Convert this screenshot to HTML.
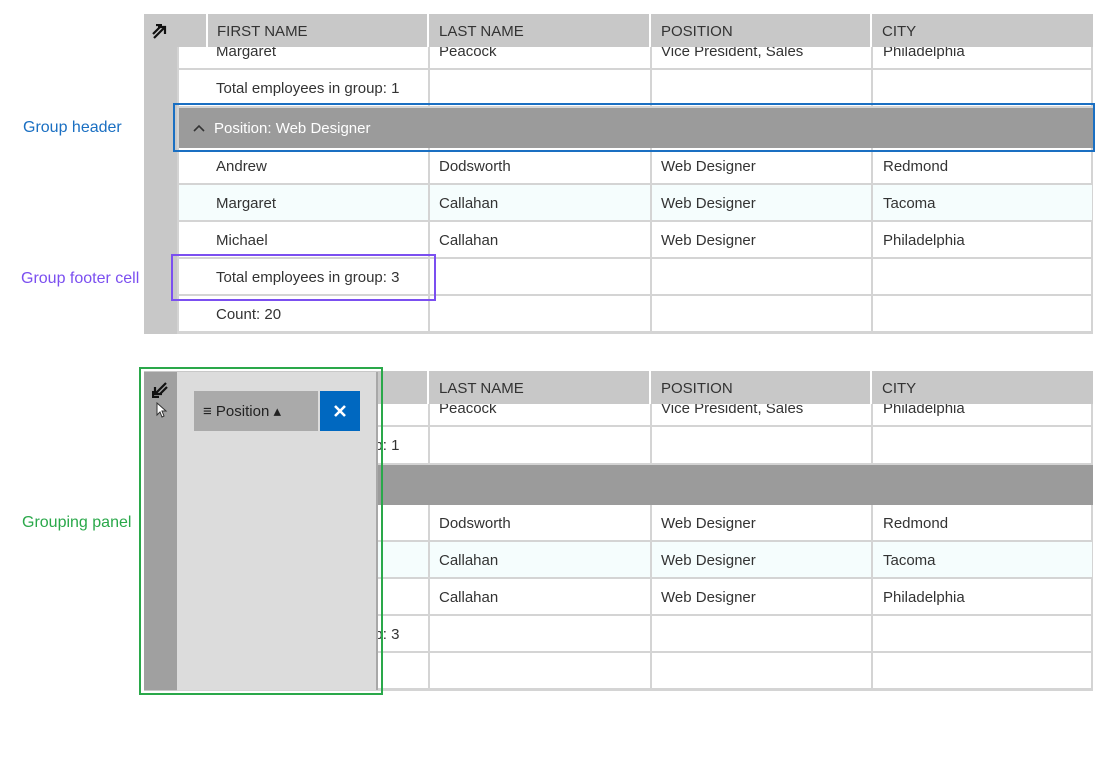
<!DOCTYPE html>
<html><head><meta charset="utf-8"><style>
*{margin:0;padding:0;box-sizing:border-box}
body{width:1100px;height:758px;background:#fff;position:relative;overflow:hidden;font-family:"Liberation Sans",sans-serif;color:#333}
.a{position:absolute}
.lbl{position:absolute;font-size:16px}
.grid{position:absolute;left:144px;width:949px;height:320px;overflow:hidden}
.bar{position:absolute;left:0;top:0;width:33px;height:320px;background:#c8c8c8}
.body{position:absolute;left:33px;top:0;width:916px;height:320px;border-left:2px solid #d4d4d4;border-right:2px solid #d4d4d4;border-bottom:2px solid #d4d4d4}
.row{position:absolute;left:0;width:913px;height:37px;border-bottom:2px solid #d4d4d4;font-size:15px}
.row span{position:absolute;top:10px}
.vl{position:absolute;top:0;width:2px;height:320px;background:#d4d4d4}
.hdr{position:absolute;left:33px;top:0;width:916px;height:33px;background:#c8c8c8;font-size:15px}
.hdr span{position:absolute;top:9px;color:#333}
.hs{position:absolute;top:0;width:2px;height:33px;background:#fff}
.gh{position:absolute;left:0;width:914px;height:40px;background:#9b9b9b;color:#fff;font-size:15px}
</style></head><body>

<div class="lbl" style="left:23px;top:119px;color:#1a6fc2">Group header</div>
<div class="lbl" style="left:21px;top:270px;color:#7b4ff0">Group footer cell</div>
<div class="lbl" style="left:22px;top:514px;color:#2aa84a">Grouping panel</div>

<!-- grid 1 -->
<div class="grid" style="top:14px">
  <div class="bar"></div>
  <svg class="a" style="left:8px;top:10px" width="16" height="16" viewBox="0 0 16 16"><path d="M2 14L12 4M6 3h7v7M1 10L8 3M4 1h6" stroke="#111" stroke-width="2.2" fill="none"/></svg>
  <div class="body">
    <div class="row" style="top:19px;height:37px"><span style="left:37px">Margaret</span><span style="left:260px">Peacock</span><span style="left:482px">Vice President, Sales</span><span style="left:704px">Philadelphia</span></div>
    <div class="row" style="top:56px;height:38px"><span style="left:37px">Total employees in group: 1</span></div>
    <div class="gh" style="top:94px"><svg class="a" style="left:14px;top:16px" width="12" height="8" viewBox="0 0 12 8"><path d="M1 7L6 2L11 7" stroke="#333" stroke-width="1.6" fill="none"/></svg><span class="a" style="left:35px;top:12px">Position: Web Designer</span></div>
    <div class="row" style="top:134px"><span style="left:37px">Andrew</span><span style="left:260px">Dodsworth</span><span style="left:482px">Web Designer</span><span style="left:704px">Redmond</span></div>
    <div class="row" style="top:171px;background:#f5fdfd"><span style="left:37px">Margaret</span><span style="left:260px">Callahan</span><span style="left:482px">Web Designer</span><span style="left:704px">Tacoma</span></div>
    <div class="row" style="top:208px"><span style="left:37px">Michael</span><span style="left:260px">Callahan</span><span style="left:482px">Web Designer</span><span style="left:704px">Philadelphia</span></div>
    <div class="row" style="top:245px"><span style="left:37px">Total employees in group: 3</span></div>
    <div class="row" style="top:282px"><span style="left:37px">Count: 20</span></div>
    <div class="vl" style="left:249px;top:0;height:94px"></div><div class="vl" style="left:249px;top:134px;height:186px"></div>
    <div class="vl" style="left:471px;top:0;height:94px"></div><div class="vl" style="left:471px;top:134px;height:186px"></div>
    <div class="vl" style="left:692px;top:0;height:94px"></div><div class="vl" style="left:692px;top:134px;height:186px"></div>
  </div>
  <div class="hdr"><div class="hs" style="left:29px"></div><div class="hs" style="left:250px"></div><div class="hs" style="left:472px"></div><div class="hs" style="left:693px"></div>
    <span style="left:40px">FIRST NAME</span><span style="left:262px">LAST NAME</span><span style="left:484px">POSITION</span><span style="left:705px">CITY</span></div>
</div>
<div class="a" style="left:173px;top:103px;width:922px;height:49px;border:2px solid #1a6fc2"></div>
<div class="a" style="left:171px;top:254px;width:265px;height:47px;border:2px solid #7b4ff0"></div>

<!-- grid 2 -->
<div class="grid" style="top:371px">
  <div class="bar"></div>
  <div class="body">
    <div class="row" style="top:19px;height:37px"><span style="left:37px">Margaret</span><span style="left:260px">Peacock</span><span style="left:482px">Vice President, Sales</span><span style="left:704px">Philadelphia</span></div>
    <div class="row" style="top:56px;height:38px"><span style="left:37px">Total employees in group: 1</span></div>
    <div class="gh" style="top:94px"></div>
    <div class="row" style="top:134px"><span style="left:260px">Dodsworth</span><span style="left:482px">Web Designer</span><span style="left:704px">Redmond</span></div>
    <div class="row" style="top:171px;background:#f5fdfd"><span style="left:260px">Callahan</span><span style="left:482px">Web Designer</span><span style="left:704px">Tacoma</span></div>
    <div class="row" style="top:208px"><span style="left:260px">Callahan</span><span style="left:482px">Web Designer</span><span style="left:704px">Philadelphia</span></div>
    <div class="row" style="top:245px"><span style="left:37px">Total employees in group: 3</span></div>
    <div class="row" style="top:282px"></div>
    <div class="vl" style="left:249px;top:0;height:94px"></div><div class="vl" style="left:249px;top:134px;height:186px"></div>
    <div class="vl" style="left:471px;top:0;height:94px"></div><div class="vl" style="left:471px;top:134px;height:186px"></div>
    <div class="vl" style="left:692px;top:0;height:94px"></div><div class="vl" style="left:692px;top:134px;height:186px"></div>
  </div>
  <div class="hdr"><div class="hs" style="left:250px"></div><div class="hs" style="left:472px"></div><div class="hs" style="left:693px"></div>
    <span style="left:262px">LAST NAME</span><span style="left:484px">POSITION</span><span style="left:705px">CITY</span></div>
</div>
<!-- grouping panel overlay -->
<div class="a" style="left:144px;top:372px;width:33px;height:318px;background:#a0a0a0"></div>
<svg class="a" style="left:152px;top:381px" width="17" height="17" viewBox="0 0 17 17"><path d="M14 2L4 12M3 6v7h7M15 6L8 13M1 10v6h6" stroke="#111" stroke-width="2.2" fill="none"/></svg>
<svg class="a" style="left:156px;top:402px" width="12" height="16" viewBox="0 0 12 16"><path d="M1 1v12l3-3 2 5 2-1-2-5h4z" fill="#fff" stroke="#333" stroke-width="1"/></svg>
<div class="a" style="left:177px;top:372px;width:201px;height:318px;background:#dcdcdc;border-right:2px solid #a8a8a8"></div>
<div class="a" style="left:194px;top:391px;width:124px;height:40px;background:#aaaaaa;font-size:15px;color:#222"><span class="a" style="left:9px;top:11px">≡ Position ▴</span></div>
<div class="a" style="left:320px;top:391px;width:40px;height:40px;background:#0068c0"><svg class="a" style="left:13px;top:13px" width="14" height="14" viewBox="0 0 14 14"><path d="M2 2L12 12M12 2L2 12" stroke="#fff" stroke-width="2.6"/></svg></div>
<div class="a" style="left:139px;top:367px;width:244px;height:328px;border:2px solid #2aa84a"></div>
</body></html>
